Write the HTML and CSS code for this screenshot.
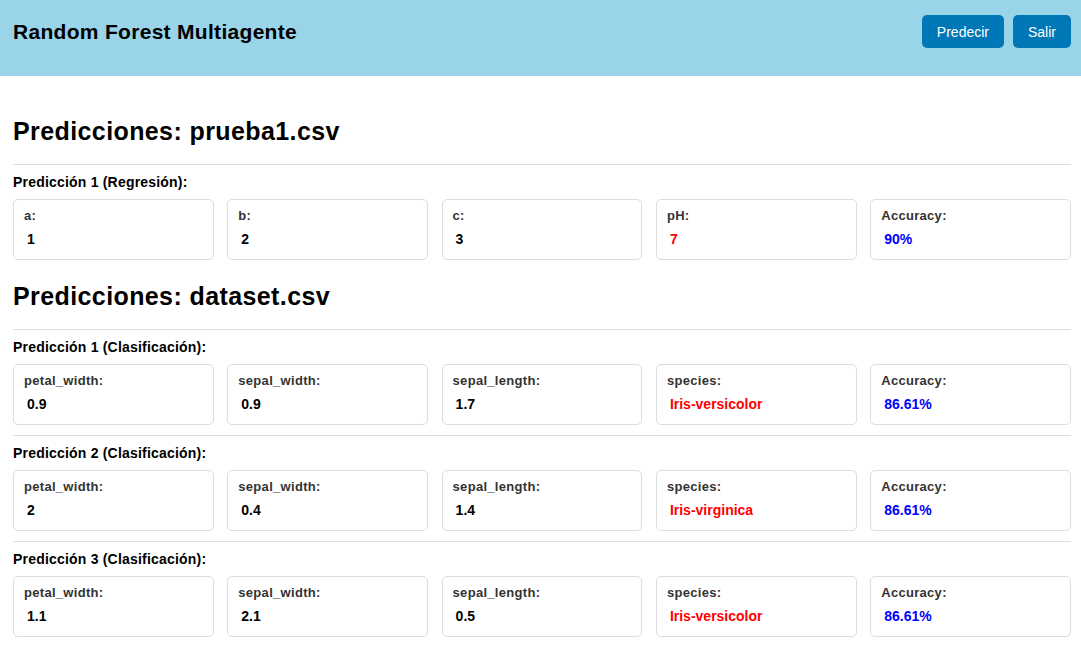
FILE: index.html
```html
<!DOCTYPE html>
<html lang="es">
<head>
<meta charset="utf-8">
<title>Random Forest Multiagente</title>
<link rel="stylesheet" href="styles.css">
</head>
<body>
<header class="topbar">
  <div class="brand">Random Forest Multiagente</div>
  <div class="actions">
    <button class="btn">Predecir</button>
    <button class="btn">Salir</button>
  </div>
</header>
<main class="content">
  <section class="file">
    <h1 class="file-title">Predicciones: prueba1.csv</h1>
    <div class="pred">
      <div class="pred-label">Predicción 1 (Regresión):</div>
      <div class="cards">
        <div class="card"><div class="key">a:</div><div class="val">1</div></div>
        <div class="card"><div class="key">b:</div><div class="val">2</div></div>
        <div class="card"><div class="key">c:</div><div class="val">3</div></div>
        <div class="card"><div class="key">pH:</div><div class="val target">7</div></div>
        <div class="card"><div class="key">Accuracy:</div><div class="val acc">90%</div></div>
      </div>
    </div>
  </section>
  <section class="file">
    <h1 class="file-title">Predicciones: dataset.csv</h1>
    <div class="pred">
      <div class="pred-label">Predicción 1 (Clasificación):</div>
      <div class="cards">
        <div class="card"><div class="key">petal_width:</div><div class="val">0.9</div></div>
        <div class="card"><div class="key">sepal_width:</div><div class="val">0.9</div></div>
        <div class="card"><div class="key">sepal_length:</div><div class="val">1.7</div></div>
        <div class="card"><div class="key">species:</div><div class="val target">Iris-versicolor</div></div>
        <div class="card"><div class="key">Accuracy:</div><div class="val acc">86.61%</div></div>
      </div>
    </div>
    <div class="pred">
      <div class="pred-label">Predicción 2 (Clasificación):</div>
      <div class="cards">
        <div class="card"><div class="key">petal_width:</div><div class="val">2</div></div>
        <div class="card"><div class="key">sepal_width:</div><div class="val">0.4</div></div>
        <div class="card"><div class="key">sepal_length:</div><div class="val">1.4</div></div>
        <div class="card"><div class="key">species:</div><div class="val target">Iris-virginica</div></div>
        <div class="card"><div class="key">Accuracy:</div><div class="val acc">86.61%</div></div>
      </div>
    </div>
    <div class="pred">
      <div class="pred-label">Predicción 3 (Clasificación):</div>
      <div class="cards">
        <div class="card"><div class="key">petal_width:</div><div class="val">1.1</div></div>
        <div class="card"><div class="key">sepal_width:</div><div class="val">2.1</div></div>
        <div class="card"><div class="key">sepal_length:</div><div class="val">0.5</div></div>
        <div class="card"><div class="key">species:</div><div class="val target">Iris-versicolor</div></div>
        <div class="card"><div class="key">Accuracy:</div><div class="val acc">86.61%</div></div>
      </div>
    </div>
  </section>
</main>
</body>
</html>
```
FILE: styles.css
```css
* { box-sizing: border-box; }
html, body { margin: 0; padding: 0; }
body {
  font-family: "Liberation Sans", Arial, sans-serif;
  color: #000;
  background: #fff;
}
.topbar {
  height: 76px;
  background: #99d4e8;
  display: flex;
  justify-content: space-between;
  align-items: flex-start;
  padding: 15px 10px 0 13px;
}
.brand {
  font-size: 21px;
  font-weight: bold;
  line-height: 33px;
  letter-spacing: 0.3px;
}
.actions {
  display: flex;
  gap: 9px;
}
.btn {
  height: 33px;
  padding: 0 15px;
  border: none;
  border-radius: 5px;
  background: #0077b6;
  color: #fff;
  font-family: "Liberation Sans", Arial, sans-serif;
  font-size: 14px;
}
.content {
  padding: 0 10px 0 13px;
}
.file-title {
  margin: 41px 0 19px;
  font-size: 25px;
  line-height: 28px;
  font-weight: bold;
  letter-spacing: 0.4px;
}
.file + .file .file-title {
  margin-top: 22px;
}
.pred {
  border-top: 1px solid #ddd;
  padding-top: 9px;
  margin-bottom: 10px;
}
.pred-label {
  font-size: 14px;
  font-weight: bold;
  line-height: 16px;
  letter-spacing: 0.2px;
  margin-bottom: 9px;
}
.cards {
  display: grid;
  grid-template-columns: repeat(5, 1fr);
  gap: 13.5px;
}
.card {
  height: 61px;
  border: 1px solid #ddd;
  border-radius: 5px;
  padding: 8px 10px;
}
.key {
  font-size: 13px;
  font-weight: bold;
  color: #333;
  line-height: 16px;
  letter-spacing: 0.3px;
}
.val {
  font-size: 14px;
  font-weight: bold;
  line-height: 16px;
  margin-top: 7px;
  padding-left: 3px;
}
.val.target { color: #f00; }
.val.acc { color: #00f; }
```
